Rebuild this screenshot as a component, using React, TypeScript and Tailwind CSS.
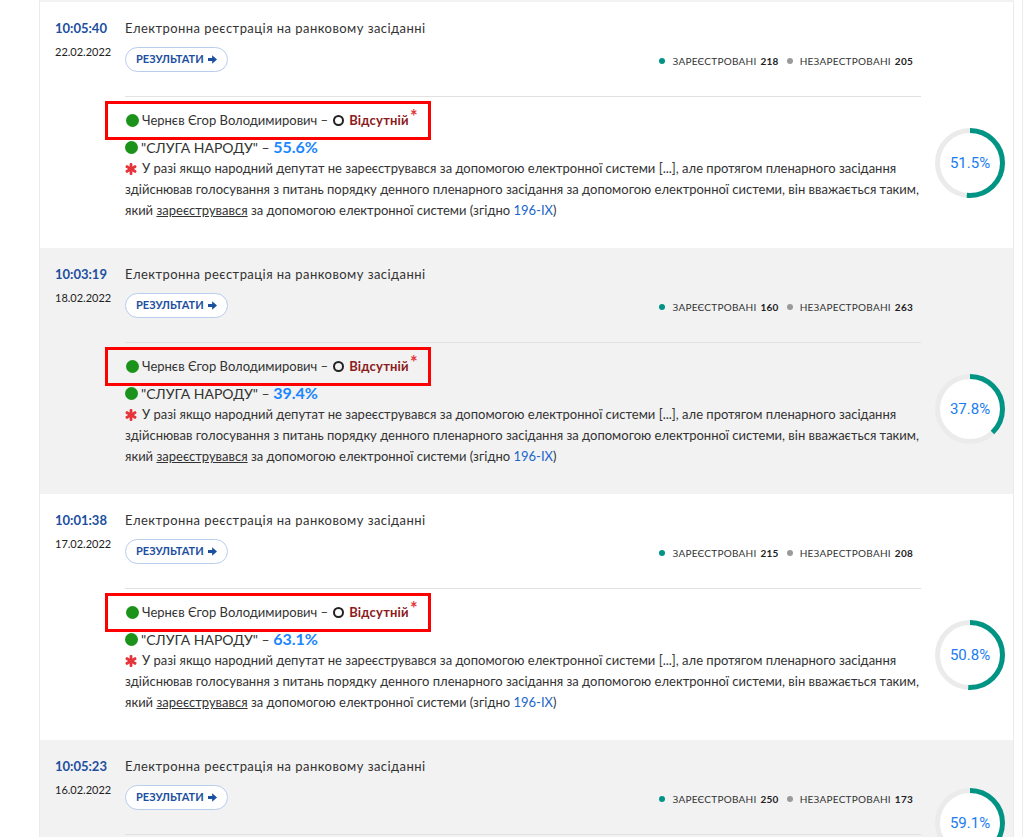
import React from 'react';

type Item = {
  time: string;
  date: string;
  reg: number;
  unreg: number;
  party: string;
  pct: number;
  gray: boolean;
  circlePad: string;
};

const ITEMS: Item[] = [
  { time: '10:05:40', date: '22.02.2022', reg: 218, unreg: 205, party: '55.6%', pct: 51.5, gray: false, circlePad: 'pt-[126px]' },
  { time: '10:03:19', date: '18.02.2022', reg: 160, unreg: 263, party: '39.4%', pct: 37.8, gray: true, circlePad: 'pt-[126px]' },
  { time: '10:01:38', date: '17.02.2022', reg: 215, unreg: 208, party: '63.1%', pct: 50.8, gray: false, circlePad: 'pt-[126px]' },
  { time: '10:05:23', date: '16.02.2022', reg: 250, unreg: 173, party: '', pct: 59.1, gray: true, circlePad: 'pt-[48px]' },
];

function Ring({ pct }: { pct: number }) {
  const r = 32.5;
  const c = 2 * Math.PI * r;
  return (
    <div className="relative w-[70px] h-[70px]">
      <svg width="70" height="70" viewBox="0 0 70 70">
        <circle cx="35" cy="35" r={r} fill="#fff" stroke="#ebebeb" strokeWidth="5" />
        <circle
          cx="35"
          cy="35"
          r={r}
          fill="none"
          stroke="#009485"
          strokeWidth="5"
          strokeDasharray={`${(c * pct) / 100} ${c}`}
          transform="rotate(-90 35 35)"
        />
      </svg>
      <div className="absolute inset-0 flex items-center justify-center text-[15px] text-[#1a7cf0] font-['Roboto',sans-serif]">
        {pct}%
      </div>
    </div>
  );
}

function Star() {
  return (
    <svg width="12" height="12" viewBox="0 0 12 12" className="inline-block mr-[5px] -mt-[2px] align-middle">
      <g fill="#e5343a">
        <rect x="4.6" y="0" width="2.8" height="12" rx="1" />
        <rect x="4.6" y="0" width="2.8" height="12" rx="1" transform="rotate(60 6 6)" />
        <rect x="4.6" y="0" width="2.8" height="12" rx="1" transform="rotate(-60 6 6)" />
      </g>
    </svg>
  );
}

function Dot() {
  return <span className="inline-block w-[13px] h-[13px] rounded-full bg-[#1b931b] mr-[3px] shrink-0" />;
}

function Row({ it }: { it: Item }) {
  return (
    <div className={`flex ${it.gray ? 'bg-[#f2f2f2]' : 'bg-white'}`}>
      <div className="w-[85px] pl-[15px] pt-[16px] shrink-0">
        <div className="text-[13px] leading-[20px] font-bold text-[#1c4f9f]">{it.time}</div>
        <div className="mt-[7px] text-[11px] leading-[14px] text-[#222]">{it.date}</div>
      </div>
      <div className="w-[796px] pt-[16px] pb-[27px] flex flex-col">
        <div className="text-[13px] leading-[20px] tracking-[0.45px] text-[#333]">
          Електронна реєстрація на ранковому засіданні
        </div>
        <div className="mt-[9px] flex items-center justify-between pr-[8px]">
          <button className="h-[25px] px-[10px] rounded-full border border-[#b9cdef] bg-white text-[11px] font-bold text-[#1c4f9f] flex items-center gap-[4px]">
            РЕЗУЛЬТАТИ
            <svg width="9" height="9" viewBox="0 0 10 10">
              <path d="M0 3.4h4.6V0.4L10 5 4.6 9.6V6.6H0z" fill="#1c4f9f" />
            </svg>
          </button>
          <div className="flex items-center text-[10px] tracking-[0.25px] text-[#333] mt-[3px]">
            <span className="w-[6px] h-[6px] rounded-full bg-[#009485] mr-[7px]" />
            ЗАРЕЄСТРОВАНІ <b className="ml-[4px] font-bold text-[#222]">{it.reg}</b>
            <span className="w-[6px] h-[6px] rounded-full bg-[#9a9a9a] ml-[8px] mr-[7px]" />
            НЕЗАРЕСТРОВАНІ <b className="ml-[4px] font-bold text-[#222]">{it.unreg}</b>
          </div>
        </div>
        <div className="mt-[24px] border-t border-[#e2e2e2]" />
        <div className="mt-[4px] -ml-[20px] self-start h-[39px] border-[3px] border-[#ff0000] pl-[18px] pr-[10px] flex items-center text-[13px] text-[#333]">
          <Dot />
          Чернєв Єгор Володимирович –
          <span className="inline-block w-[11px] h-[11px] rounded-full border-[2px] border-[#222] ml-[5px] mr-[5px]" />
          <b className="font-bold text-[#8c1c1c] tracking-[0.2px]">Відсутній</b>
          <span className="text-[#e5343a] font-bold text-[18px] leading-none -mt-[9px] ml-[1px]">*</span>
        </div>
        <div className="-mt-[3px] h-[20px] flex items-center text-[14px] text-[#333]">
          <Dot />
          "СЛУГА НАРОДУ" –&nbsp;<b className="font-bold text-[16px] text-[#1a86ff]">{it.party}</b>
        </div>
        <p className="mt-[1px] text-[13px] leading-[21px] text-[#333]">
          <Star />
          У разі якщо народний депутат не зареєструвався за допомогою електронної системи [...], але протягом пленарного засідання
          <br />
          здійснював голосування з питань порядку денного пленарного засідання за допомогою електронної системи, він вважається таким,
          <br />
          який <span className="underline">зареєструвався</span> за допомогою електронної системи (згідно{' '}
          <span className="text-[#1a66c9]">196-IX</span>)
        </p>
      </div>
      <div className={`w-[92px] pl-[14px] shrink-0 ${it.circlePad}`}>
        <Ring pct={it.pct} />
      </div>
    </div>
  );
}

export default function App() {
  return (
    <div className="h-[837px] overflow-hidden bg-white flex font-['Lato','Open_Sans',sans-serif]">
      <div className="w-[39px] shrink-0" />
      <div className="w-[975px] shrink-0 border-x border-[#ebebeb] border-t-2 border-t-[#f2f2f2]">
        {ITEMS.map((it) => (
          <Row key={it.time} it={it} />
        ))}
      </div>
      <div className="w-[8px] shrink-0" />
      <div className="w-[1px] bg-[#ececec]" />
    </div>
  );
}
